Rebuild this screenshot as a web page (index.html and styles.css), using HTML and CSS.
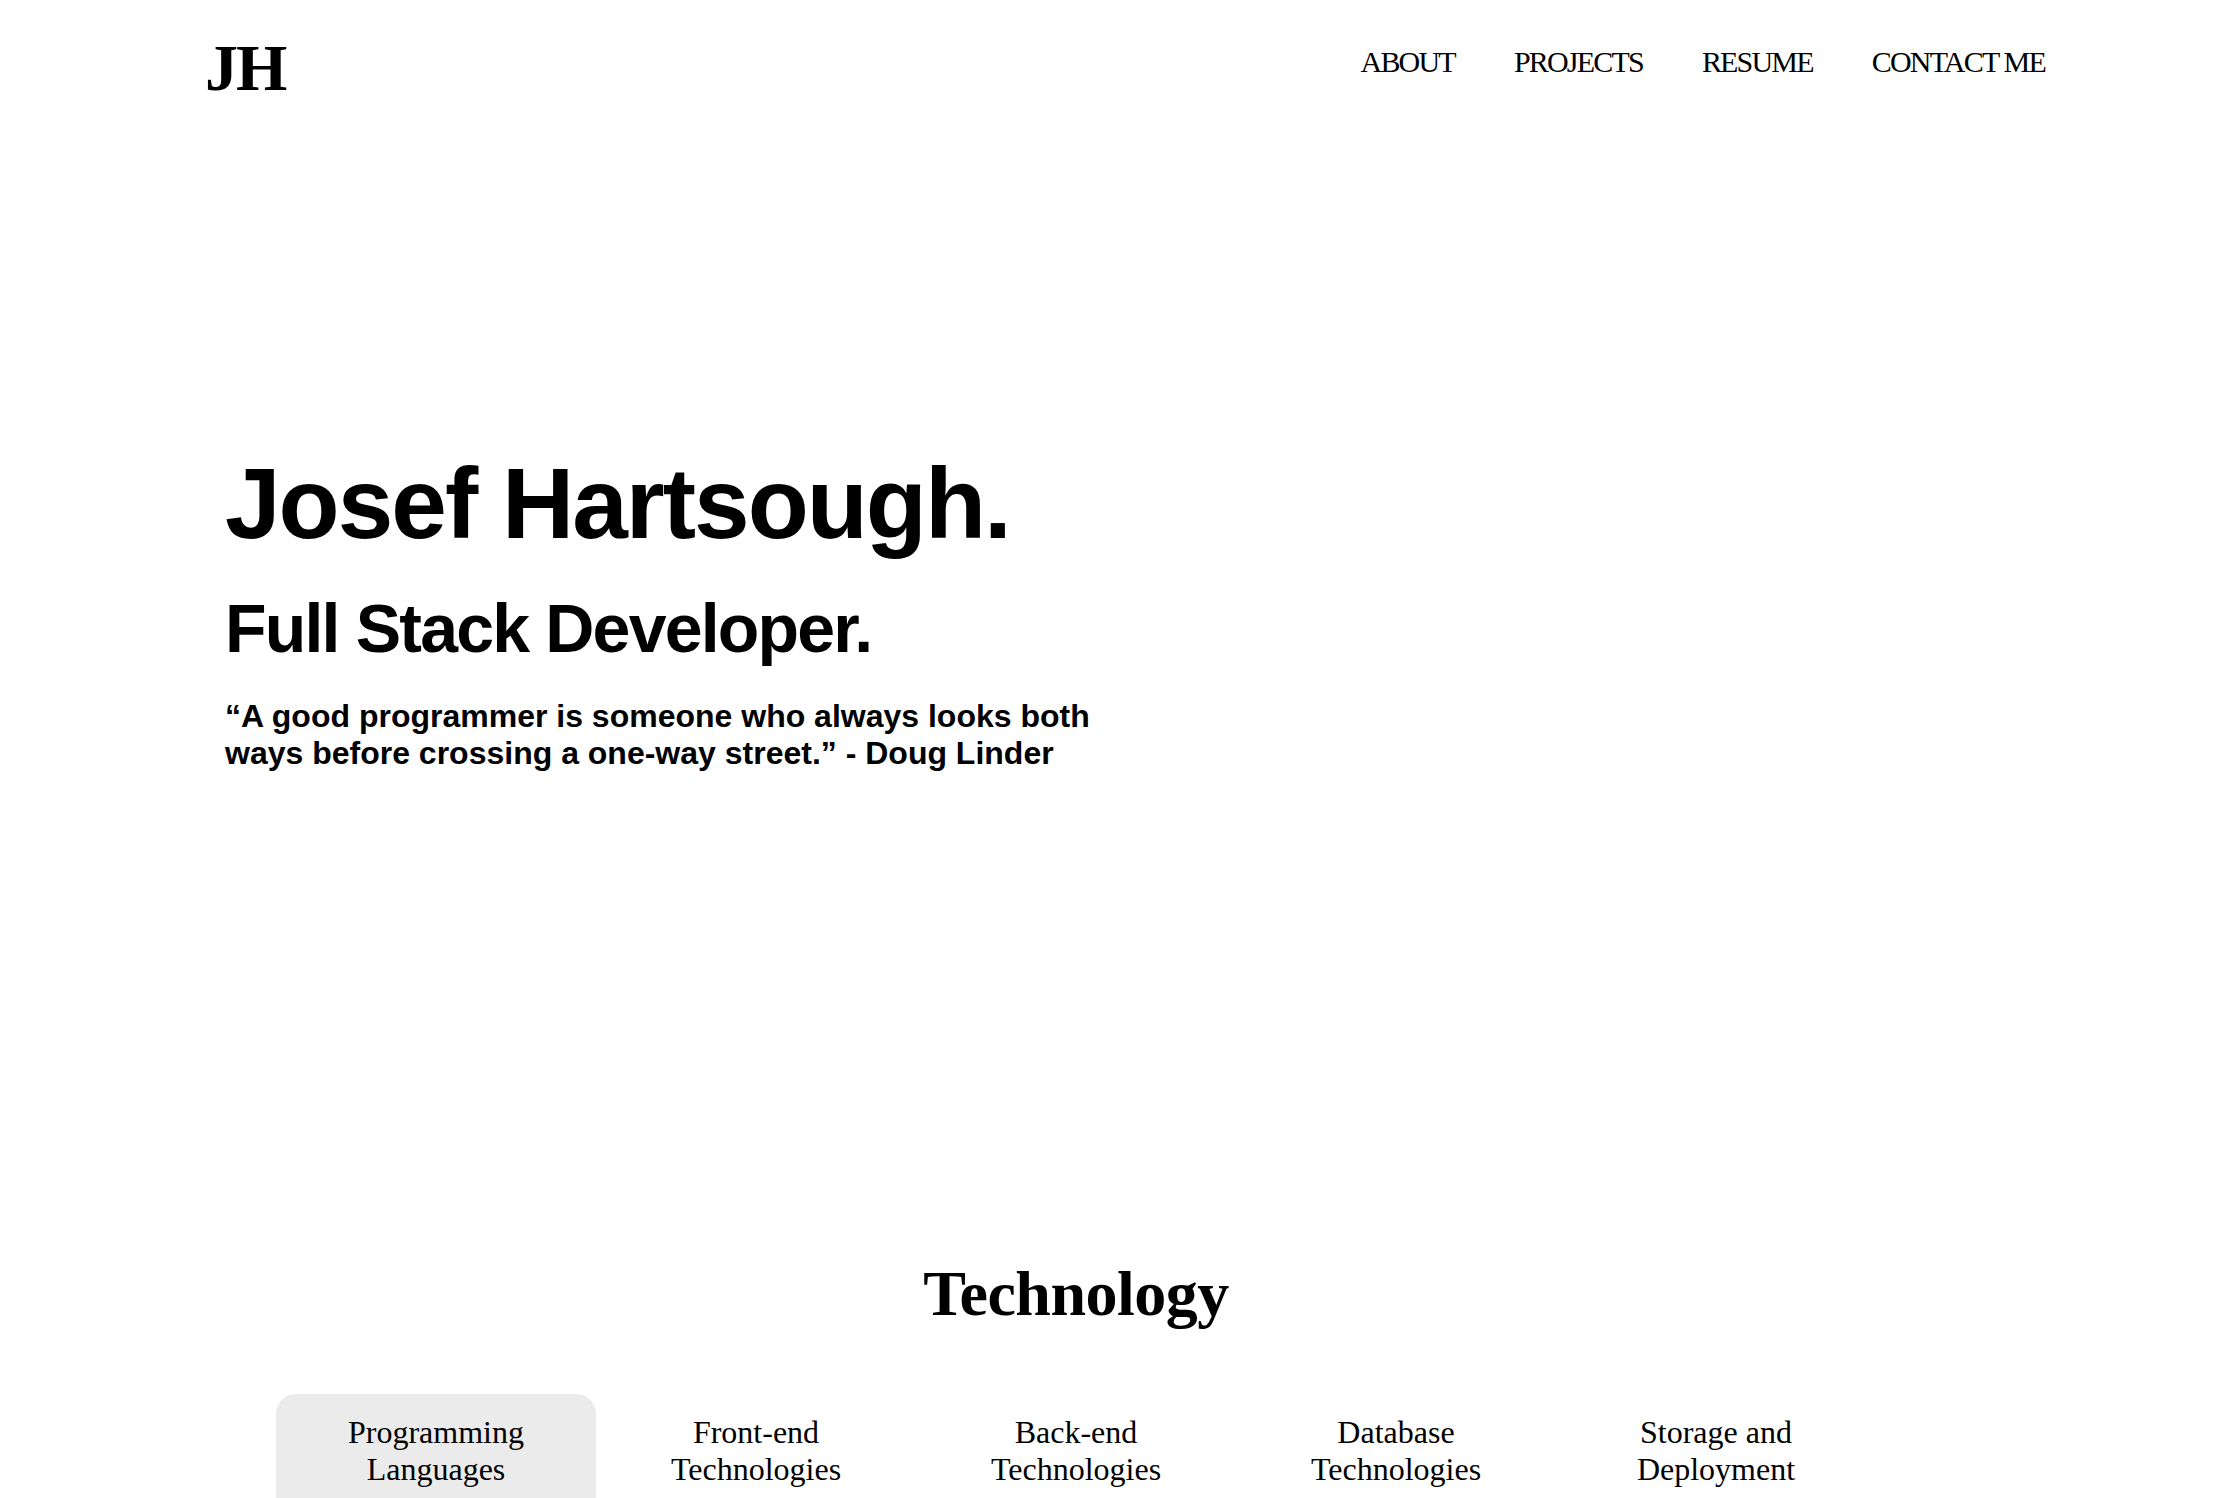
FILE: index.html
```html
<!DOCTYPE html>
<html lang="en">
<head>
<meta charset="utf-8">
<title>Josef Hartsough</title>
<link rel="stylesheet" href="styles.css">
</head>
<body>
<header class="site-header">
  <div class="logo">JH</div>
  <nav class="nav">
    <a href="#about">ABOUT</a>
    <a href="#projects">PROJECTS</a>
    <a href="#resume">RESUME</a>
    <a href="#contact">CONTACT ME</a>
  </nav>
</header>
<main>
  <section class="hero">
    <h1 class="hero-name">Josef Hartsough.</h1>
    <h2 class="hero-role">Full Stack Developer.</h2>
    <p class="hero-quote">“A good programmer is someone who always looks both ways before crossing a one-way street.” - Doug Linder</p>
  </section>
  <section class="tech">
    <h2 class="tech-title">Technology</h2>
    <div class="tabs">
      <div class="tab active">Programming Languages</div>
      <div class="tab">Front-end Technologies</div>
      <div class="tab">Back-end Technologies</div>
      <div class="tab">Database Technologies</div>
      <div class="tab">Storage and Deployment</div>
    </div>
  </section>
</main>
</body>
</html>
```

FILE: styles.css
```css
html, body {
  margin: 0;
  padding: 0;
  background: #fff;
  color: #000;
  font-family: "Liberation Serif", "Times New Roman", serif;
}

.site-header {
  display: flex;
  justify-content: space-between;
  align-items: flex-start;
  padding: 30px 177px 0 205px;
}

.logo {
  font-size: 66px;
  font-weight: bold;
  line-height: 1.15;
  letter-spacing: -2px;
}

.nav {
  display: flex;
  gap: 59px;
  margin-top: 15px;
}

.nav a {
  color: #000;
  text-decoration: none;
  font-size: 30px;
  line-height: 1.15;
  letter-spacing: -1.8px;
}

.hero {
  padding: 340px 0 0 225px;
  font-family: "Liberation Sans", Arial, sans-serif;
}

.hero-name {
  margin: 0;
  font-size: 100px;
  font-weight: bold;
  line-height: 1.15;
  letter-spacing: -2px;
}

.hero-role {
  margin: 28px 0 0;
  font-size: 68px;
  font-weight: bold;
  line-height: 1.15;
  letter-spacing: -1.8px;
}

.hero-quote {
  margin: 31px 0 0;
  max-width: 900px;
  font-size: 32px;
  font-weight: bold;
  line-height: 37px;
}

.tech {
  margin: 485px 0 0 276px;
  width: 1600px;
}

.tech-title {
  margin: 0;
  text-align: center;
  font-size: 64px;
  font-weight: bold;
  line-height: 1.15;
  letter-spacing: -0.5px;
}

.tabs {
  display: grid;
  grid-template-columns: repeat(5, 1fr);
  margin-top: 63px;
}

.tab {
  padding: 20px 30px 40px;
  text-align: center;
  font-size: 32px;
  line-height: 37px;
  border-radius: 20px 20px 0 0;
}

.tab.active {
  background: #ebebeb;
}
```
